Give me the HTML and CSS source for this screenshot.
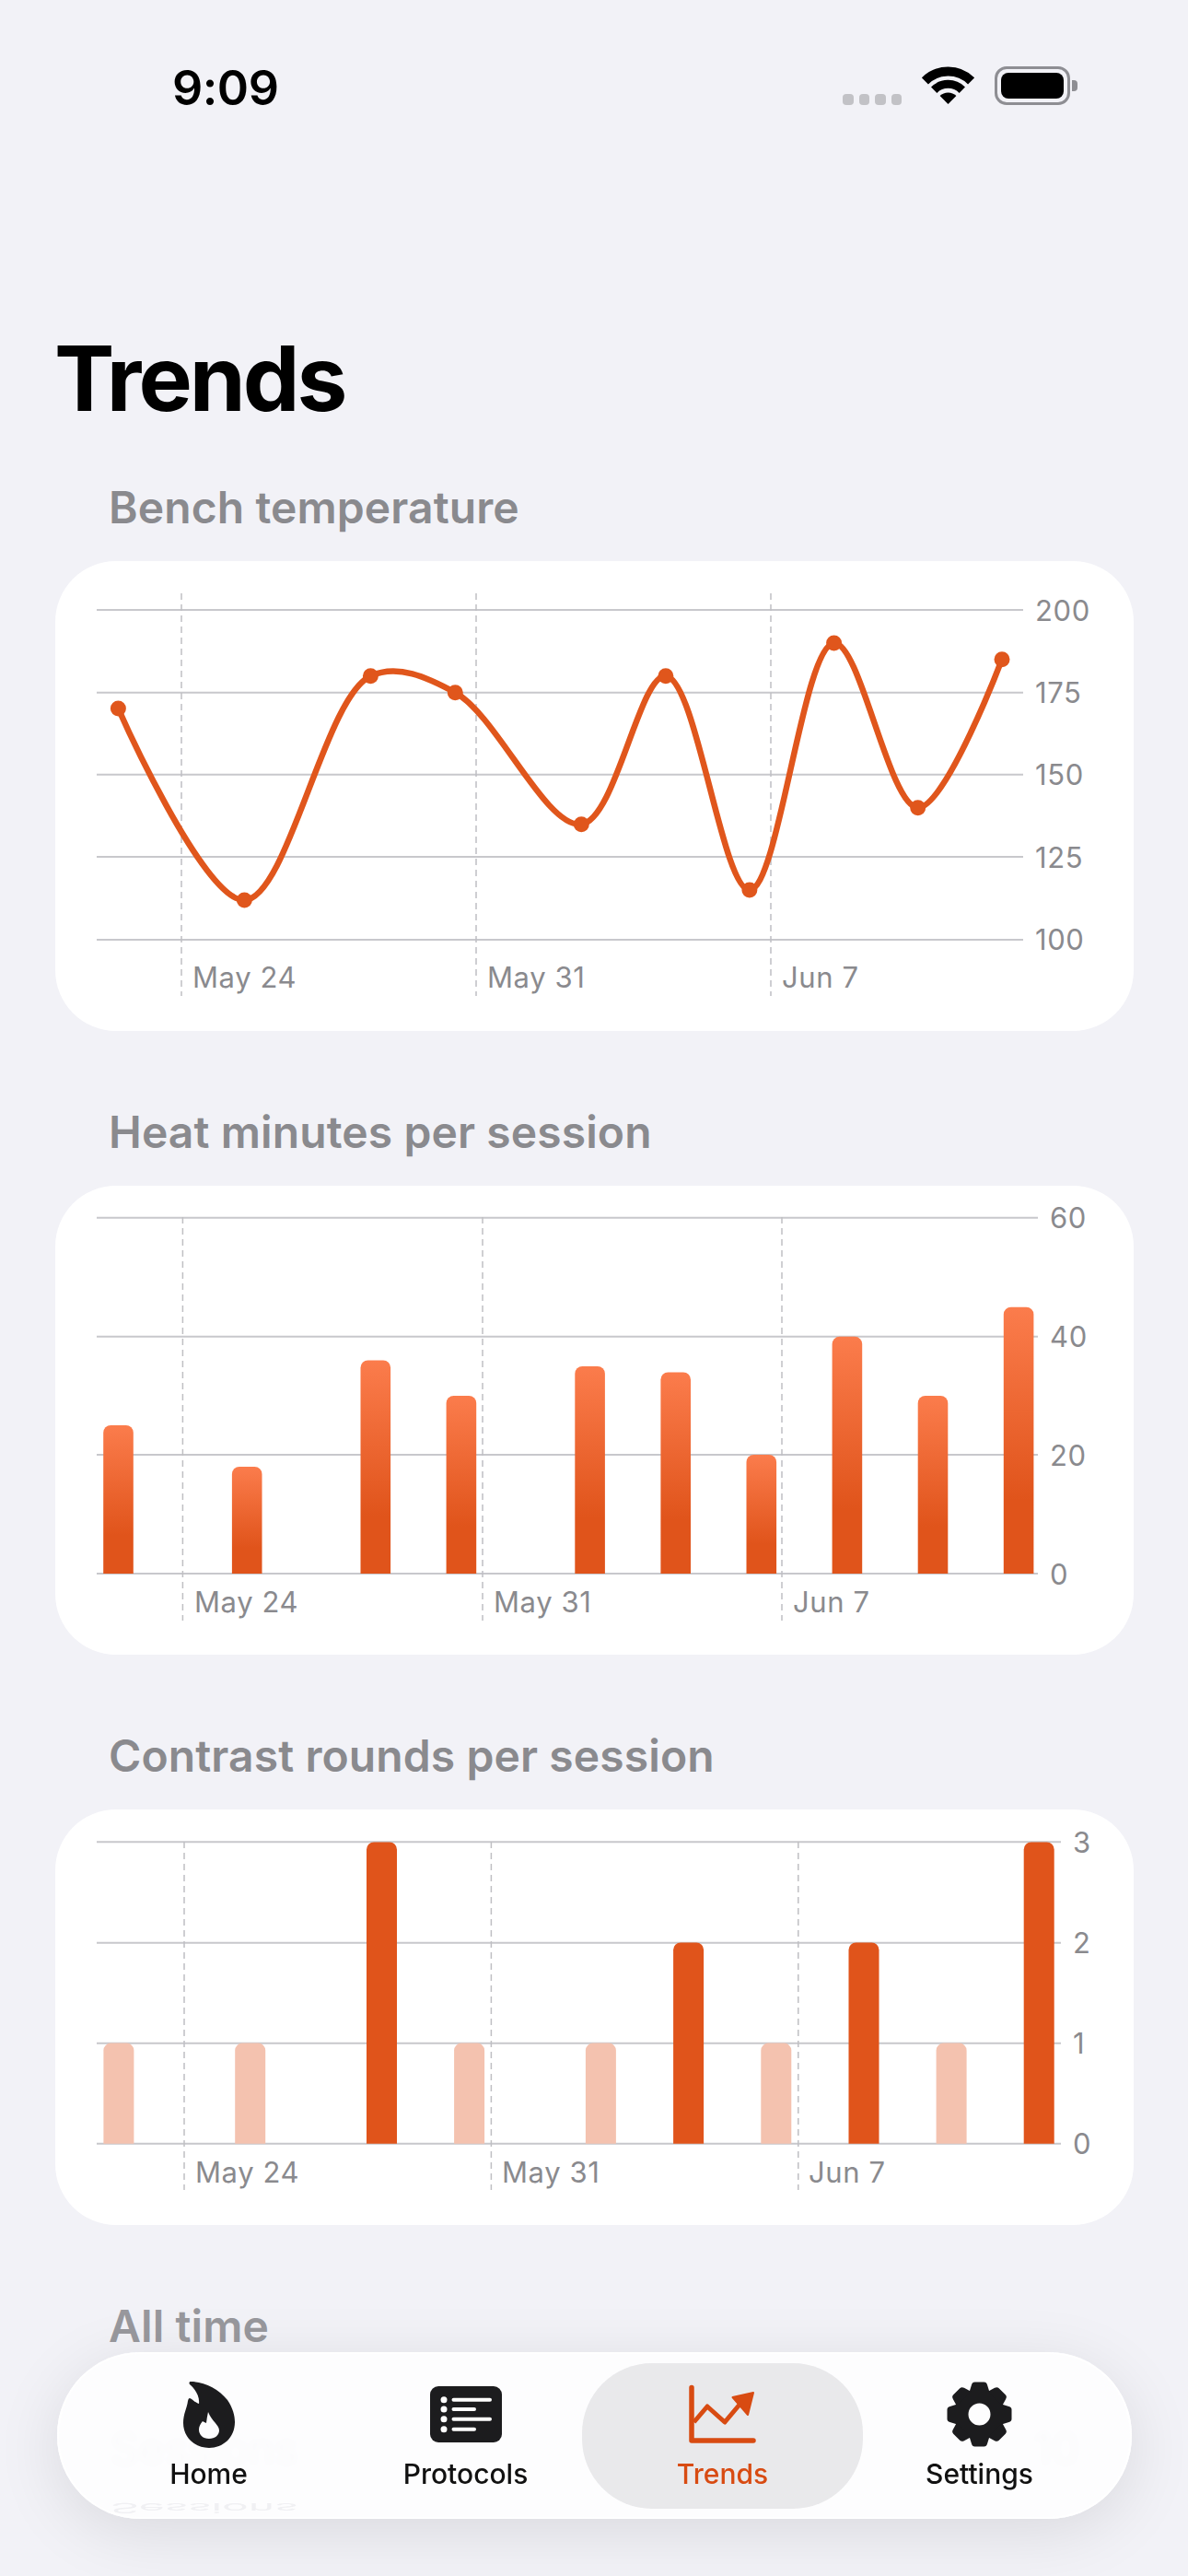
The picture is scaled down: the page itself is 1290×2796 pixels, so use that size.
FILE: index.html
```html
<!DOCTYPE html>
<html lang="en">
<head>
    <meta charset="UTF-8">
    <meta name="viewport" content="width=device-width, initial-scale=1.0">
    <title>Trends</title>
    <link rel="stylesheet" href="styles.css">
</head>
<body>
    <div class="status-bar">
        <span class="time">9:09</span>
        <div class="status-icons">
            <div class="signal"><i></i><i></i><i></i><i></i></div>
            <svg class="wifi" width="57" height="41" viewBox="0 0 57 41">
                <path d="M3.4 15.9a35.5 35.5 0 0 1 50.2 0" fill="none" stroke="#000" stroke-width="10"/>
                <path d="M13.2 25.7a21.6 21.6 0 0 1 30.6 0" fill="none" stroke="#000" stroke-width="9"/>
                <path d="M28.5 41 19.6 32.1a12.6 12.6 0 0 1 17.8 0z" fill="#000"/>
            </svg>
            <div class="battery"><div class="battery-body"><div class="battery-level"></div></div><div class="battery-nub"></div></div>
        </div>
    </div>

    <main class="content">
        <h1>Trends</h1>

        <section class="section">
            <h2>Bench temperature</h2>
            <div class="card">
                <svg class="chart" width="1171" height="510" viewBox="60 609 1171 510">
                    <path class="grid" d="M105 662H1111M105 751.7H1111M105 840.7H1111M105 930H1111M105 1020H1111"/>
                    <path class="tick" d="M197 644V1081M517 644V1081M837 644V1081"/>
                    <path class="line" d="M128.4 769C128.4 769 221 978.5 265.4 977C312.5 975.4 352.2 756.9 402.4 733.7C431.5 720.3 463.4 734.8 494.3 751.7C539.3 776.3 592.8 899.5 631.3 894.7C668.5 890.1 694.4 731.7 722.9 733.7C756 736.1 784.4 966.7 813.9 966C845.4 965.3 872.1 700.4 905.6 698C933.8 696 965.7 876 996.7 876.7C1026.5 877.3 1088 715.7 1088 715.7"/>
                    <g class="dots">
                        <circle cx="128.4" cy="769" r="8.5"/>
                        <circle cx="265.4" cy="977" r="8.5"/>
                        <circle cx="402.4" cy="733.7" r="8.5"/>
                        <circle cx="494.3" cy="751.7" r="8.5"/>
                        <circle cx="631.3" cy="894.7" r="8.5"/>
                        <circle cx="722.9" cy="733.7" r="8.5"/>
                        <circle cx="813.9" cy="966" r="8.5"/>
                        <circle cx="905.6" cy="698" r="8.5"/>
                        <circle cx="996.7" cy="876.7" r="8.5"/>
                        <circle cx="1088" cy="715.7" r="8.5"/>
                    </g>
                    <g class="label">
                        <text x="1124" y="673.5">200</text>
                        <text x="1124" y="763">175</text>
                        <text x="1124" y="852">150</text>
                        <text x="1124" y="941.5">125</text>
                        <text x="1124" y="1031">100</text>
                        <text x="209" y="1071.7">May 24</text>
                        <text x="529" y="1071.7">May 31</text>
                        <text x="849" y="1071.7">Jun 7</text>
                    </g>
                </svg>
            </div>
        </section>

        <section class="section">
            <h2>Heat minutes per session</h2>
            <div class="card">
                <svg class="chart" width="1171" height="509" viewBox="60 1288 1171 509">
                    <defs>
                        <linearGradient id="heat" x1="0" y1="0" x2="0" y2="1">
                            <stop offset="0" stop-color="#fb7c4c"/>
                            <stop offset="0.7" stop-color="#e0541b"/>
                        </linearGradient>
                        <clipPath id="heat-clip"><rect x="60" y="1288" width="1171" height="421"/></clipPath>
                    </defs>
                    <path class="grid" d="M105 1322.7H1127M105 1451.7H1127M105 1580H1127M105 1709H1127"/>
                    <path class="tick" d="M198.4 1322V1760M524 1322V1760M849 1322V1760"/>
                    <g class="bars-heat" clip-path="url(#heat-clip)">
                        <rect x="112.2" y="1548" width="32.6" height="171" rx="8"/>
                        <rect x="251.9" y="1593" width="32.6" height="126" rx="8"/>
                        <rect x="391.5" y="1477.5" width="32.6" height="241.5" rx="8"/>
                        <rect x="484.6" y="1516" width="32.6" height="203" rx="8"/>
                        <rect x="624.3" y="1484" width="32.6" height="235" rx="8"/>
                        <rect x="717.4" y="1490.4" width="32.6" height="228.6" rx="8"/>
                        <rect x="810.5" y="1580" width="32.6" height="139" rx="8"/>
                        <rect x="903.6" y="1451.8" width="32.6" height="267.2" rx="8"/>
                        <rect x="996.7" y="1516" width="32.6" height="203" rx="8"/>
                        <rect x="1089.8" y="1419.7" width="32.6" height="299.3" rx="8"/>
                    </g>
                    <g class="label">
                        <text x="1140" y="1334">60</text>
                        <text x="1140" y="1463">40</text>
                        <text x="1140" y="1591.5">20</text>
                        <text x="1140" y="1720.5">0</text>
                        <text x="211" y="1751">May 24</text>
                        <text x="536" y="1751">May 31</text>
                        <text x="861" y="1751">Jun 7</text>
                    </g>
                </svg>
            </div>
        </section>

        <section class="section">
            <h2>Contrast rounds per session</h2>
            <div class="card">
                <svg class="chart" width="1171" height="451" viewBox="60 1965 1171 451">
                    <defs>
                        <clipPath id="rounds-clip"><rect x="60" y="1965" width="1171" height="362.7"/></clipPath>
                    </defs>
                    <path class="grid" d="M105 2000.3H1152M105 2109.7H1152M105 2218.7H1152M105 2327.7H1152"/>
                    <path class="tick" d="M200 2000V2378M533.4 2000V2378M866.8 2000V2378"/>
                    <g class="bars-rounds" clip-path="url(#rounds-clip)">
                        <rect class="faded" x="112.4" y="2218.6" width="33" height="119" rx="8"/>
                        <rect class="faded" x="255.2" y="2218.6" width="33" height="119" rx="8"/>
                        <rect x="398" y="2000.4" width="33" height="337" rx="8"/>
                        <rect class="faded" x="493.1" y="2218.6" width="33" height="119" rx="8"/>
                        <rect class="faded" x="635.9" y="2218.6" width="33" height="119" rx="8"/>
                        <rect x="731.1" y="2109.5" width="33" height="228" rx="8"/>
                        <rect class="faded" x="826.3" y="2218.6" width="33" height="119" rx="8"/>
                        <rect x="921.5" y="2109.5" width="33" height="228" rx="8"/>
                        <rect class="faded" x="1016.6" y="2218.6" width="33" height="119" rx="8"/>
                        <rect x="1111.7" y="2000.4" width="33" height="337" rx="8"/>
                    </g>
                    <g class="label">
                        <text x="1165" y="2011.5">3</text>
                        <text x="1165" y="2121">2</text>
                        <text x="1165" y="2230">1</text>
                        <text x="1165" y="2339">0</text>
                        <text x="212" y="2370">May 24</text>
                        <text x="545" y="2370">May 31</text>
                        <text x="878" y="2370">Jun 7</text>
                    </g>
                </svg>
            </div>
        </section>

        <section class="section">
            <h2 class="under-bar">All time</h2>
            <div class="stat-row"><span>Sessions</span><span>10</span></div>
        </section>
    </main>

    <nav class="tab-bar">
        <span class="mirror">Sessions</span>
        <a class="tab">
            <svg width="56" height="73" viewBox="0 0 56 73">
                <path fill="#1c1c1e" fill-rule="evenodd" d="M8 1C22 1 38 8 48 21C54 30 56 38 56 45C56 62 43 73 28 73C12 73 0 61 0 46C0 36 4 30 5 22C5.500 20 6 19 7 19C10 20 13 24 17 25C18 17 13 9 7 4C6 2.500 6.500 1 8 1ZM27 34C26 38 25.500 42 25 46C23.500 45.500 22 44.500 21 44C18.500 47 17 50 17 53C17 59 21.500 63 28 63C34.500 63 39 59 39 54C39 48 31 44 27 34Z"/>
            </svg>
            <span>Home</span>
        </a>
        <a class="tab">
            <svg width="78" height="61" viewBox="0 0 78 61">
                <rect width="78" height="61" rx="9" fill="#1c1c1e"/>
                <g fill="#fff">
                    <circle cx="15" cy="14.700" r="3.500"/>
                    <circle cx="15" cy="25" r="3.500"/>
                    <circle cx="15" cy="35.700" r="3.500"/>
                    <circle cx="15" cy="46.700" r="3.500"/>
                </g>
                <path d="M25.500 14.700H65M25.500 25H48M25.500 35.700H65M25.500 46.700H48" stroke="#fff" stroke-width="4" stroke-linecap="round" fill="none"/>
            </svg>
            <span>Protocols</span>
        </a>
        <a class="tab tab-active">
            <svg width="73" height="63" viewBox="0 0 73 63">
                <path d="M3 2.500V60H70" fill="none" stroke="#d84b12" stroke-width="5.500" stroke-linecap="round" stroke-linejoin="round"/>
                <path d="M5.500 40 20 23 39 40 55 21" fill="none" stroke="#d84b12" stroke-width="5" stroke-linejoin="round"/>
                <path d="M70 8 47.500 13 64 32Z" fill="#d84b12" stroke="#d84b12" stroke-width="2" stroke-linejoin="round"/>
            </svg>
            <span>Trends</span>
        </a>
        <a class="tab">
            <svg width="71" height="70" viewBox="-35.500 -35 71 70">
                <defs>
                    <path id="gear-tooth" d="M-11-24-8.500-32Q-7.800-35-5-35H5Q7.800-35 8.500-32L11-24Z"/>
                </defs>
                <circle r="19.500" fill="none" stroke="#1c1c1e" stroke-width="15"/>
                <g fill="#1c1c1e">
                    <use href="#gear-tooth"/>
                    <use href="#gear-tooth" transform="rotate(45)"/>
                    <use href="#gear-tooth" transform="rotate(90)"/>
                    <use href="#gear-tooth" transform="rotate(135)"/>
                    <use href="#gear-tooth" transform="rotate(180)"/>
                    <use href="#gear-tooth" transform="rotate(225)"/>
                    <use href="#gear-tooth" transform="rotate(270)"/>
                    <use href="#gear-tooth" transform="rotate(315)"/>
                </g>
            </svg>
            <span>Settings</span>
        </a>
    </nav>
</body>
</html>
```

FILE: styles.css
```css
* {
    box-sizing: border-box;
}

body {
    margin: 0;
    width: 1290px;
    height: 2796px;
    overflow: hidden;
    position: relative;
    background-color: #f2f2f7;
    font-family: Inter, "Liberation Sans", sans-serif;
    color: #000;
}

.status-bar {
    height: 130px;
    padding: 74px 119px 0 187px;
    display: flex;
    justify-content: space-between;
    align-items: flex-start;
}

.time {
    font-size: 52px;
    font-weight: 600;
    line-height: 44px;
    letter-spacing: -0.5px;
}

.status-icons {
    display: flex;
    align-items: flex-start;
    width: 256px;
    height: 42px;
    margin-top: -2px;
}

.signal {
    display: flex;
    gap: 6px;
    margin-top: 30px;
    margin-right: 22px;
}

.signal i {
    width: 11.5px;
    height: 11.5px;
    border-radius: 4px;
    background-color: #c2c2c6;
}

.battery {
    display: flex;
    align-items: center;
    margin-left: 22px;
}

.battery-body {
    width: 82px;
    height: 42px;
    padding: 4px;
    border: 3px solid #8e8e93;
    border-radius: 13px;
}

.battery-level {
    width: 100%;
    height: 100%;
    border-radius: 8px;
    background-color: #000;
}

.battery-nub {
    width: 6px;
    height: 12px;
    margin-left: 2px;
    border-radius: 0 4px 4px 0;
    background-color: #8e8e93;
}

.content {
    padding: 0 59px 0 60px;
}

h1 {
    margin: 226px 0 0 -1px;
    font-size: 98px;
    font-weight: 700;
    line-height: 110px;
    letter-spacing: -3px;
}

.section {
    margin-bottom: 81px;
}

h1 + .section {
    margin-top: 56px;
}

h2 {
    margin: 0 0 29px 58px;
    font-size: 48px;
    font-weight: 600;
    line-height: 58px;
    color: #8a8a8e;
    letter-spacing: 0.1px;
}

.under-bar {
    color: #98989d;
}

.card {
    background-color: #fff;
    border-radius: 66px;
    overflow: hidden;
}

.chart {
    display: block;
}

.grid {
    fill: none;
    stroke: #c8c8cc;
    stroke-width: 2;
}

.tick {
    fill: none;
    stroke: #bfbfc3;
    stroke-width: 1.5;
    stroke-dasharray: 7 5;
}

.line {
    fill: none;
    stroke: #e0561c;
    stroke-width: 6.5;
}

.dots {
    fill: #e0561c;
}

.label {
    font-size: 31px;
    fill: #8a8a8e;
    letter-spacing: 0.6px;
}

.bars-heat {
    fill: url(#heat);
}

.bars-rounds {
    fill: #e0541b;
}

.bars-rounds .faded {
    fill: #f4c2af;
}

.stat-row {
    display: flex;
    justify-content: space-between;
    margin: 75px 59px 0 60px;
    font-size: 48px;
    line-height: 58px;
    color: #aaa;
}

.tab-bar {
    position: absolute;
    left: 62px;
    top: 2553px;
    width: 1167px;
    height: 181px;
    padding: 0 25px;
    display: grid;
    grid-template-columns: repeat(4, 279px);
    border-radius: 90px;
    background-color: rgba(253, 253, 254, 0.965);
    backdrop-filter: blur(3px);
    box-shadow: 0 14px 70px rgba(0, 0, 0, 0.1), inset 0 0 0 2px rgba(255, 255, 255, 0.7);
}

.mirror {
    position: absolute;
    left: 58px;
    top: 140px;
    font-size: 48px;
    line-height: 58px;
    color: #f0f0f3;
    transform: scale(1, -0.3);
    transform-origin: left center;
}

.tab {
    position: relative;
    height: 100%;
    padding-top: 31px;
    display: flex;
    flex-direction: column;
    align-items: center;
    font-size: 30px;
    font-weight: 500;
    color: #111;
}

.tab svg {
    position: relative;
    height: 73px;
    overflow: visible;
}

.tab span {
    position: absolute;
    top: 114px;
    line-height: 36px;
}

.tab-active {
    color: #d84b12;
}

.tab-active::before {
    content: "";
    position: absolute;
    left: -13px;
    right: -13px;
    top: 12px;
    bottom: 11px;
    border-radius: 76px;
    background-color: #e9e9eb;
}
```
